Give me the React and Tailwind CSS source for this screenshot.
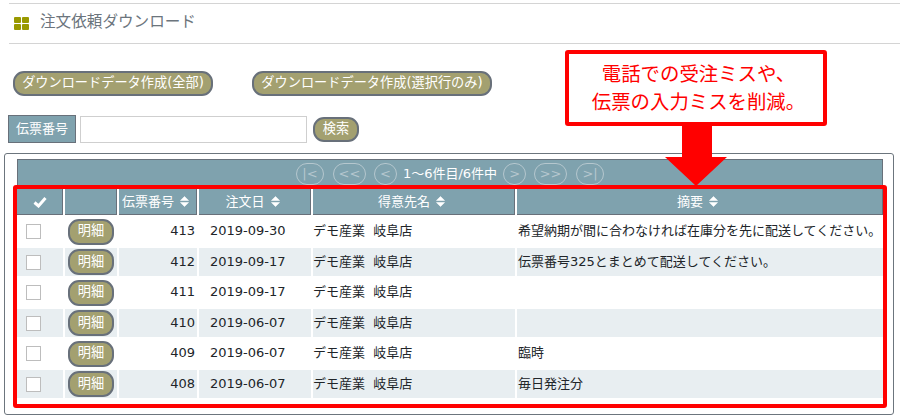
import React from 'react';

const rows = [
  { no: 413, date: '2019-09-30', note: '希望納期が間に合わなければ在庫分を先に配送してください。', shade: false },
  { no: 412, date: '2019-09-17', note: '伝票番号325とまとめて配送してください。', shade: true },
  { no: 411, date: '2019-09-17', note: '', shade: false },
  { no: 410, date: '2019-06-07', note: '', shade: true },
  { no: 409, date: '2019-06-07', note: '臨時', shade: false },
  { no: 408, date: '2019-06-07', note: '毎日発注分', shade: true },
];

function SortIcon() {
  return (
    <svg width="9" height="11" viewBox="0 0 9 11" className="ml-[6px] inline-block" fill="#fff" stroke="#fff" strokeWidth="0.6" strokeLinejoin="round">
      <path d="M4.5 0.5 L8.5 4.4 H0.5 Z" />
      <path d="M0.5 6.6 H8.5 L4.5 10.5 Z" />
    </svg>
  );
}

function PillButton({ className, children }) {
  return (
    <div className={`flex items-center justify-center rounded-[11px] border-[2px] border-[#68707a] bg-[#a3a070] pb-[1px] text-[13.2px] leading-none text-white ${className}`}>
      {children}
    </div>
  );
}

function PagerButton({ className, children }) {
  return (
    <div className={`flex h-[22px] items-center justify-center rounded-full border border-[#b5c7ce] text-[13px] leading-none text-[#b5c7ce] ${className}`}>
      {children}
    </div>
  );
}

function HeaderCell({ children, sort }) {
  return (
    <div className={`flex items-center justify-center border border-[#68707a] border-t-0 border-l-0 bg-[#7fa2ae] text-[13px] text-white ${sort ? 'pr-[4px]' : ''}`}>
      {children}
      {sort && <SortIcon />}
    </div>
  );
}

export default function App() {
  return (
    <div className="relative h-[420px] w-[900px] overflow-hidden bg-white font-['DejaVu_Sans','Noto_Sans_CJK_JP',sans-serif] text-[#212529]">
      {/* Title */}
      <div className="ml-[9px] mt-[3px] flex h-[41px] items-center border-y border-[#d4d4d4] pl-[5px]">
        <div className="grid grid-cols-2 gap-[1px]">
          <span className="h-[6px] w-[7px] rounded-[1px] bg-[#999900]" />
          <span className="h-[6px] w-[7px] rounded-[1px] bg-[#999900]" />
          <span className="h-[6px] w-[7px] rounded-[1px] bg-[#999900]" />
          <span className="h-[6px] w-[7px] rounded-[1px] bg-[#999900]" />
        </div>
        <h1 className="ml-[11px] pb-[2px] text-[15.6px] font-normal text-[#6c757d]">注文依頼ダウンロード</h1>
      </div>

      {/* Download buttons */}
      <div className="ml-[13px] mt-[27px] flex gap-[39px]">
        <PillButton className="h-[25px] w-[200px]">ダウンロードデータ作成(全部)</PillButton>
        <PillButton className="h-[25px] w-[240px]">ダウンロードデータ作成(選択行のみ)</PillButton>
      </div>

      {/* Search */}
      <div className="ml-[8px] mt-[19px] flex items-center">
        <div className="flex h-[28px] w-[68px] items-center justify-center border border-[#68707a] bg-[#7fa2ae] text-[13px] text-white">伝票番号</div>
        <div className="ml-[4px] mt-[1px] h-[27px] w-[227px] border border-[#cfcfcf] bg-white" />
        <PillButton className="ml-[6px] h-[25px] w-[46px]">検索</PillButton>
      </div>

      {/* Panel */}
      <div className="ml-[4px] mt-[10px] h-[262px] w-[890px] rounded-[3px] border border-[#6c757d] px-[12px] pt-[5px]">
        <div className="flex h-[29px] w-[866px] items-center justify-center border border-[#68707a] bg-[#7fa2ae]">
          <PagerButton className="w-[28px]">|&lt;</PagerButton>
          <PagerButton className="ml-[9px] w-[33px]">&lt;&lt;</PagerButton>
          <PagerButton className="ml-[8px] w-[23px]">&lt;</PagerButton>
          <span className="mx-[6px] text-[13px] text-white">1～6件目/6件中</span>
          <PagerButton className="w-[23px]">&gt;</PagerButton>
          <PagerButton className="ml-[8px] w-[33px]">&gt;&gt;</PagerButton>
          <PagerButton className="ml-[9px] w-[28px]">&gt;|</PagerButton>
        </div>

        <div className="mt-[1px] grid h-[26px] w-[866px] grid-cols-[46px_52px_78px_112px_202px_366px] gap-x-[2px]">
          <HeaderCell>
            <svg width="14" height="12" viewBox="0 0 14 12" fill="none" stroke="#fff" strokeWidth="3">
              <path d="M1.5 6.5 L5.5 10 L12.5 2" />
            </svg>
          </HeaderCell>
          <HeaderCell />
          <HeaderCell sort>伝票番号</HeaderCell>
          <HeaderCell sort>注文日</HeaderCell>
          <HeaderCell sort>得意先名</HeaderCell>
          <HeaderCell sort>摘要</HeaderCell>
        </div>

        {rows.map((r) => {
          const cell = `flex items-center text-[13px] ${r.shade ? 'bg-[#e8eef1]' : 'bg-white'}`;
          const text = r.shade ? '' : 'pb-[2px]';
          return (
            <div key={r.no} className={`grid w-[866px] grid-cols-[46px_52px_78px_112px_202px_366px] gap-x-[2px] ${r.shade ? 'h-[28px]' : 'h-[33px]'}`}>
              <div className={`${cell} pl-[9px]`}>
                <span className="h-[15px] w-[15px] border border-[#bdbdbd] bg-white" />
              </div>
              <div className={`${cell} justify-center`}>
                <PillButton className="h-[26px] w-[46px]">明細</PillButton>
              </div>
              <div className={`${cell} ${text} justify-end pr-[2px]`}>{r.no}</div>
              <div className={`${cell} ${text} pl-[11px]`}>{r.date}</div>
              <div className={`${cell} ${text} whitespace-pre`}>デモ産業  岐阜店</div>
              <div className={`${cell} ${text} whitespace-nowrap pl-[1px]`}>{r.note}</div>
            </div>
          );
        })}
      </div>

      {/* Red annotation over the table */}
      <div className="absolute left-[13px] top-[185px] h-[223px] w-[874px] rounded-[3px] border-[4px] border-[#ff0000]" />
      <svg className="absolute left-[665px] top-[126px]" width="62" height="61" viewBox="0 0 62 61" fill="#ff0000">
        <path d="M17 0 H47 V31 H62 L31 60 L0 31 H17 Z" />
      </svg>
      <div className="absolute left-[565px] top-[50px] flex h-[76px] w-[262px] flex-col items-center justify-center rounded-[3px] border-[4px] border-[#ff0000] bg-white pl-[5px] pt-[2px] text-[19.4px] leading-[28px] text-[#ff0000]">
        <span>電話での受注ミスや、</span>
        <span>伝票の入力ミスを削減。</span>
      </div>
    </div>
  );
}
